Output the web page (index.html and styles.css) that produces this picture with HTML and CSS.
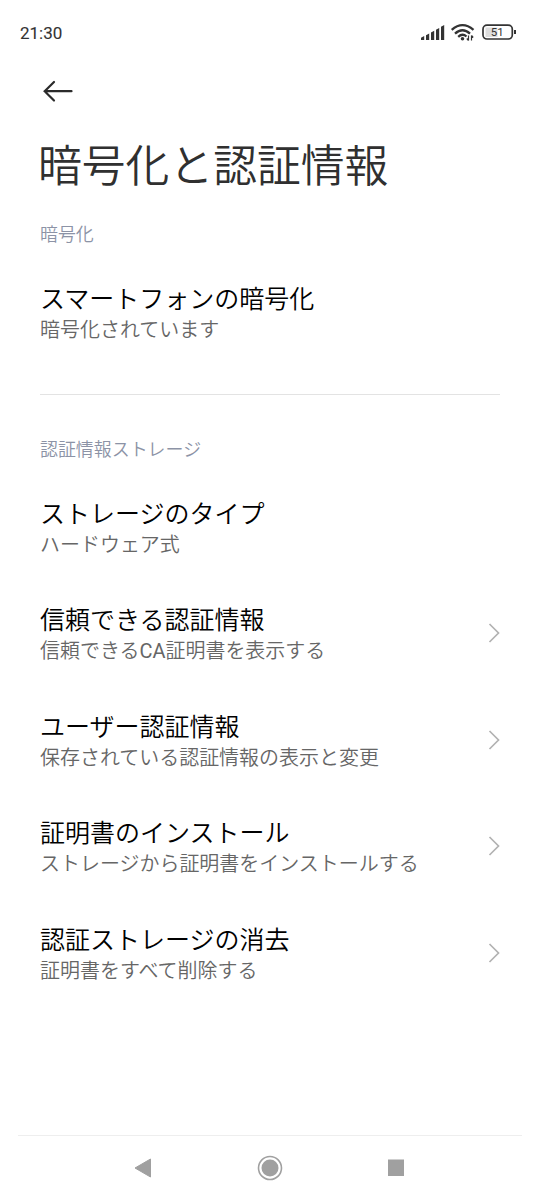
FILE: index.html
```html
<!DOCTYPE html>
<html lang="ja">
<head>
<meta charset="utf-8">
<title>暗号化と認証情報</title>
<link rel="stylesheet" href="styles.css">
</head>
<body>
<div class="screen">
  <header class="status">
    <span class="clock">21:30</span>
    <svg class="status-icons" width="98" height="20" viewBox="0 0 98 20">
      <path d="M1 18v-2.200l3.200-1.800v4zM6 18v-4.700l3.200-1.800V18zM11 18v-7.500l3.200-1.800V18zM16 18V7.700l3.200-1.800V18zM21 18V4.700l3.200-1.800V18z" fill="#333"/>
      <g fill="none" stroke="#333" stroke-width="2.300"><path d="M31.700 7.800Q42.500 -1.500 53.500 7.800M35 11.600Q42.500 4.800 50 11.600M38.200 14.800Q42.500 11 46.500 14.500"/></g>
      <circle cx="42.500" cy="16.700" r="1.800" fill="#333"/>
      <path d="M48.500 13.500v5M46.800 16.500l1.700 2M51.500 18.500v-5M53.200 15.500l-1.700-2" fill="none" stroke="#333" stroke-width="1.200"/>
      <rect x="65.500" y="5.500" width="12" height="9.500" fill="#ddd"/>
      <rect x="63" y="3.200" width="29.300" height="13.800" rx="4" fill="none" stroke="#333" stroke-width="1.700"/>
      <path d="M95 8v4" stroke="#333" stroke-width="2"/>
      <text class="battery-text" x="77.300" y="14.200">51</text>
    </svg>
  </header>
  <nav class="toolbar">
    <svg width="32" height="24" viewBox="0 0 32 24"><path d="M12 3L2.700 12.200L12 21.500M2.700 12.200H29.500" fill="none" stroke="#2b2b2b" stroke-width="2.200" stroke-linecap="round"/></svg>
  </nav>
  <h1 class="title">暗号化と認証情報</h1>
  <main>
    <section class="group">
      <h2 class="label">暗号化</h2>
      <div class="row"><div><p class="name">スマートフォンの暗号化</p><p class="desc">暗号化されています</p></div></div>
    </section>
    <section class="group storage">
      <h2 class="label">認証情報ストレージ</h2>
      <div class="row"><div><p class="name">ストレージのタイプ</p><p class="desc">ハードウェア式</p></div></div>
      <div class="row"><div><p class="name">信頼できる認証情報</p><p class="desc">信頼できる<span class="latin">CA</span>証明書を表示する</p></div><svg class="chev" viewBox="0 0 12 20"><path d="M1.500 1L10.500 10L1.500 19"/></svg></div>
      <div class="row"><div><p class="name">ユーザー認証情報</p><p class="desc">保存されている認証情報の表示と変更</p></div><svg class="chev" viewBox="0 0 12 20"><path d="M1.500 1L10.500 10L1.500 19"/></svg></div>
      <div class="row"><div><p class="name">証明書のインストール</p><p class="desc">ストレージから証明書をインストールする</p></div><svg class="chev" viewBox="0 0 12 20"><path d="M1.500 1L10.500 10L1.500 19"/></svg></div>
      <div class="row"><div><p class="name">認証ストレージの消去</p><p class="desc">証明書をすべて削除する</p></div><svg class="chev" viewBox="0 0 12 20"><path d="M1.500 1L10.500 10L1.500 19"/></svg></div>
    </section>
  </main>
  <footer class="navbar">
    <svg width="26" height="26" viewBox="0 0 26 26"><path d="M20.500 4V22L5 13Z" fill="#a0a0a0" stroke="#a0a0a0" stroke-linejoin="round"/></svg>
    <svg width="26" height="26" viewBox="0 0 26 26"><circle cx="13" cy="13" r="8.500" fill="#a0a0a0"/><circle cx="13" cy="13" r="11.500" fill="none" stroke="#a0a0a0" stroke-width="1.600"/></svg>
    <svg width="26" height="26" viewBox="0 0 26 26"><rect x="4" y="4.500" width="16" height="16.500" fill="#a0a0a0"/></svg>
  </footer>
</div>
</body>
</html>
```
FILE: styles.css
```css
* { box-sizing: border-box; }
body { margin: 0; background: #fff; font-family: Roboto, "Noto Sans CJK JP", sans-serif; }
h1, h2, p { margin: 0; font-weight: 350; white-space: nowrap; }
svg { display: block; flex: none; }
.screen { width: 540px; height: 1200px; display: flex; flex-direction: column; }
.status { height: 64px; padding: 0 22px 0 20px; display: flex; align-items: center; justify-content: space-between; }
.clock { padding-top: 1px; font-size: 17px; font-weight: 400; color: #333; -webkit-text-stroke: 0.1px #333; }
.battery-text { font-size: 11.500px; font-weight: 400; fill: #333; text-anchor: middle; }
.toolbar { height: 54px; padding-left: 42px; display: flex; align-items: center; }
.title { height: 92px; padding-left: 38px; font-size: 43.800px; line-height: 98px; color: #303030; }
main { padding: 0 40px; }
.group { padding-top: 11px; }
.storage { border-top: 1px solid #e3e3e3; margin-top: 26px; padding-top: 41px; }
.label { margin-bottom: 12px; font-size: 17.950px; line-height: 28px; color: #8c93a6; }
.row { height: 106.500px; display: flex; align-items: center; justify-content: space-between; }
.name { font-size: 25px; line-height: 32px; color: #000; }
.desc { font-size: 19.980px; line-height: 28px; color: #666; }
.latin { font-weight: 400; }
.chev { width: 12px; height: 20px; margin-bottom: 4px; fill: none; stroke: #b2b2b2; stroke-width: 1.700px; }
.navbar { margin: auto 18px 0; height: 65px; border-top: 1px solid #eee; padding: 0 112px; display: flex; align-items: center; justify-content: space-between; }
```
